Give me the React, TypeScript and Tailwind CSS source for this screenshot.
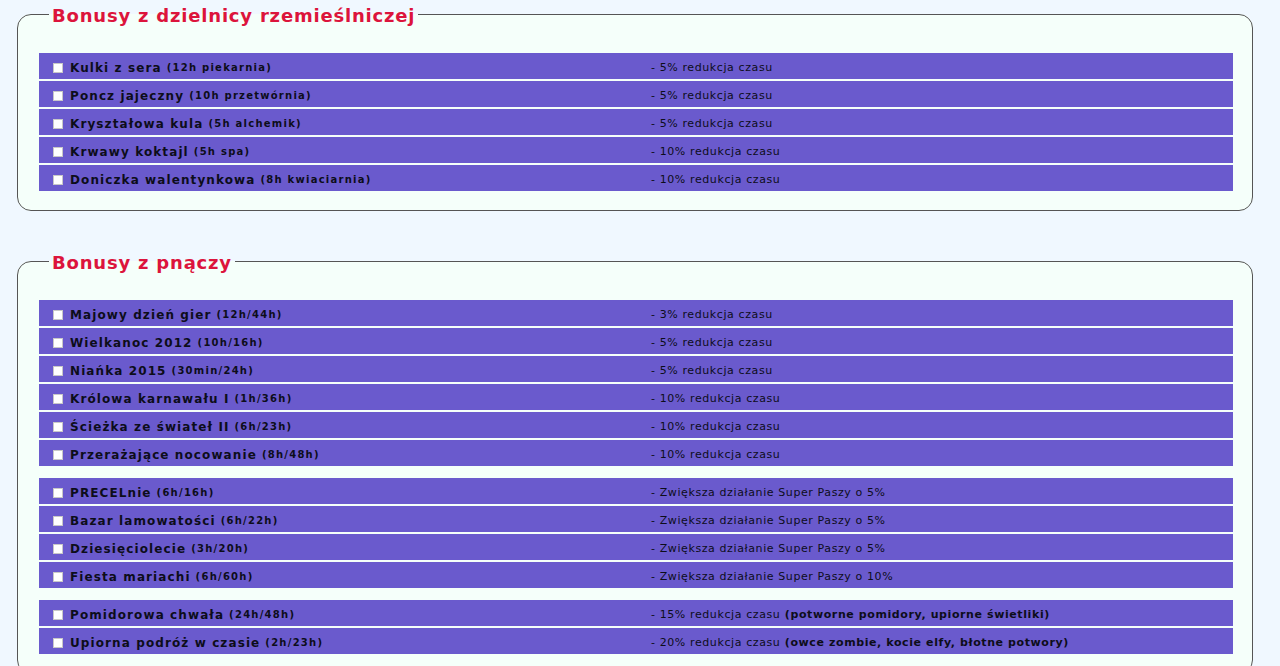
import React from "react";

type Row = { name: string; detail: string; effect: string; extra?: string };

const craft: Row[] = [
  { name: "Kulki z sera", detail: "(12h piekarnia)", effect: "- 5% redukcja czasu" },
  { name: "Poncz jajeczny", detail: "(10h przetwórnia)", effect: "- 5% redukcja czasu" },
  { name: "Kryształowa kula", detail: "(5h alchemik)", effect: "- 5% redukcja czasu" },
  { name: "Krwawy koktajl", detail: "(5h spa)", effect: "- 10% redukcja czasu" },
  { name: "Doniczka walentynkowa", detail: "(8h kwiaciarnia)", effect: "- 10% redukcja czasu" },
];

const vines: Row[][] = [
  [
    { name: "Majowy dzień gier", detail: "(12h/44h)", effect: "- 3% redukcja czasu" },
    { name: "Wielkanoc 2012", detail: "(10h/16h)", effect: "- 5% redukcja czasu" },
    { name: "Niańka 2015", detail: "(30min/24h)", effect: "- 5% redukcja czasu" },
    { name: "Królowa karnawału I", detail: "(1h/36h)", effect: "- 10% redukcja czasu" },
    { name: "Ścieżka ze świateł II", detail: "(6h/23h)", effect: "- 10% redukcja czasu" },
    { name: "Przerażające nocowanie", detail: "(8h/48h)", effect: "- 10% redukcja czasu" },
  ],
  [
    { name: "PRECELnie", detail: "(6h/16h)", effect: "- Zwiększa działanie Super Paszy o 5%" },
    { name: "Bazar lamowatości", detail: "(6h/22h)", effect: "- Zwiększa działanie Super Paszy o 5%" },
    { name: "Dziesięciolecie", detail: "(3h/20h)", effect: "- Zwiększa działanie Super Paszy o 5%" },
    { name: "Fiesta mariachi", detail: "(6h/60h)", effect: "- Zwiększa działanie Super Paszy o 10%" },
  ],
  [
    {
      name: "Pomidorowa chwała",
      detail: "(24h/48h)",
      effect: "- 15% redukcja czasu",
      extra: "(potworne pomidory, upiorne świetliki)",
    },
    {
      name: "Upiorna podróż w czasie",
      detail: "(2h/23h)",
      effect: "- 20% redukcja czasu",
      extra: "(owce zombie, kocie elfy, błotne potwory)",
    },
  ],
];

function BonusRow({ r }: { r: Row }) {
  return (
    <div className="grid h-[26px] grid-cols-[612px_1fr] items-center bg-[#6a5acd] pt-[3px] text-[#0d0d1a]">
      <div className="flex items-center pl-[14px]">
        <span className="mr-[7px] inline-block h-[10px] w-[10px] border border-[#c8c8c8] bg-white" />
        <span className="text-[12px] font-bold tracking-[1.1px]">{r.name}</span>
        <span className="ml-[5px] text-[10px] font-bold tracking-[1.25px]">{r.detail}</span>
      </div>
      <div className="pt-[2px] text-[11px] tracking-[0.6px]">
        {r.effect}
        {r.extra && <span className="font-bold"> {r.extra}</span>}
      </div>
    </div>
  );
}

function Group({ rows }: { rows: Row[] }) {
  return (
    <div className="flex flex-col gap-[2px]">
      {rows.map((r) => (
        <BonusRow key={r.name} r={r} />
      ))}
    </div>
  );
}

function Box({ title, children }: { title: string; children: React.ReactNode }) {
  return (
    <fieldset className="ml-[17px] w-[1236px] rounded-[14px] border border-[#555] bg-[#f5fffa] pb-[19px] pl-[21px] pr-[19px]">
      <legend className="ml-[10px] px-[3px] pt-[3px] text-[18px] font-bold leading-[22px] tracking-[0.8px] text-[#dc143c]">
        {title}
      </legend>
      <div className="mt-[26px]">{children}</div>
    </fieldset>
  );
}

export default function App() {
  return (
    <div
      className="min-h-screen bg-[#f0f8ff] pt-[2px]"
      style={{ fontFamily: '"DejaVu Sans", Verdana, sans-serif' }}
    >
      <Box title="Bonusy z dzielnicy rzemieślniczej">
        <Group rows={craft} />
      </Box>
      <div className="h-[38px]" />
      <Box title="Bonusy z pnączy">
        <div className="flex flex-col gap-[12px]">
          {vines.map((g, i) => (
            <Group key={i} rows={g} />
          ))}
        </div>
      </Box>
    </div>
  );
}
